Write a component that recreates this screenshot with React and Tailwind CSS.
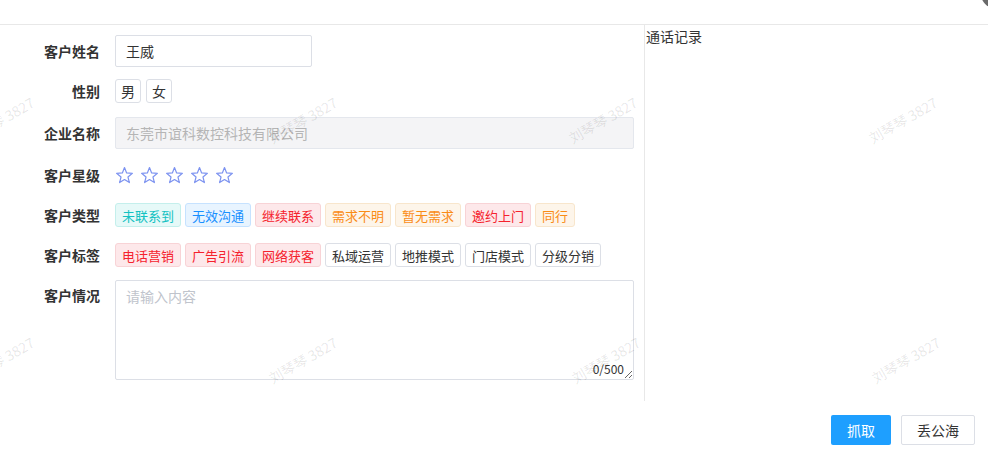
import React from "react";

const typeTags = [
  { text: "未联系到", tone: "teal" },
  { text: "无效沟通", tone: "blue" },
  { text: "继续联系", tone: "red" },
  { text: "需求不明", tone: "orange" },
  { text: "暂无需求", tone: "orange" },
  { text: "邀约上门", tone: "red" },
  { text: "同行", tone: "orange" },
];

const labelTags = [
  { text: "电话营销", tone: "red" },
  { text: "广告引流", tone: "red" },
  { text: "网络获客", tone: "red" },
  { text: "私域运营", tone: "plain" },
  { text: "地推模式", tone: "plain" },
  { text: "门店模式", tone: "plain" },
  { text: "分级分销", tone: "plain" },
];

const toneClass = {
  teal: "text-[#13c2c2] bg-[#e6f9f8] border-[#c4efec]",
  blue: "text-[#1890ff] bg-[#e8f4ff] border-[#c6e2ff]",
  red: "text-[#f5222d] bg-[#fde8ea] border-[#f8d3d6]",
  orange: "text-[#fa8c16] bg-[#fdf5ea] border-[#f8e6cc]",
  plain: "text-[#333] bg-white border-[#dcdfe6]",
};

function Tag({ text, tone }) {
  return (
    <span
      className={`h-[24px] px-[6px] flex items-center border rounded-[3px] text-[13px] leading-none ${toneClass[tone]}`}
    >
      {text}
    </span>
  );
}

function Star() {
  return (
    <svg width="19" height="19" viewBox="0 0 24 24" fill="none">
      <polygon
        points="12,2 14.7,8.78 21.99,9.26 16.38,13.92 18.17,20.99 12,17.1 5.83,20.99 7.62,13.92 2.01,9.26 9.3,8.78"
        stroke="#7d93f0"
        strokeWidth="1.5"
        strokeLinejoin="round"
      />
    </svg>
  );
}

function Label({ children, top }) {
  return (
    <div
      className={`w-[100px] shrink-0 text-right font-bold text-[14px] text-[#333] ${
        top ? "self-start pt-[5px] leading-[20px]" : ""
      }`}
    >
      {children}
    </div>
  );
}

export default function App() {
  return (
    <div className="relative w-[988px] h-[453px] bg-white overflow-hidden font-[family-name:Noto_Sans_CJK_SC,sans-serif] text-[#333]">
      <div className="h-[25px] border-b border-[#e8e8e8]" />

      <div className="flex h-[376px]">
        <div className="w-[645px] shrink-0 border-r border-[#e8e8e8] flex flex-col">
          <div className="mt-[10px] h-[32px] flex items-center">
            <Label>客户姓名</Label>
            <div className="ml-[15px] w-[197px] h-[32px] border border-[#dcdfe6] rounded-[2px] flex items-center px-[10px] text-[14px] text-[#333]">
              王威
            </div>
          </div>

          <div className="mt-[12px] h-[24px] flex items-center">
            <Label>性别</Label>
            <div className="ml-[15px] flex gap-[5px]">
              <span className="w-[26px] h-[24px] flex items-center justify-center border border-[#dcdfe6] rounded-[3px] text-[14px]">
                男
              </span>
              <span className="w-[26px] h-[24px] flex items-center justify-center border border-[#dcdfe6] rounded-[3px] text-[14px]">
                女
              </span>
            </div>
          </div>

          <div className="mt-[14px] h-[32px] flex items-center">
            <Label>企业名称</Label>
            <div className="ml-[15px] w-[519px] h-[32px] bg-[#f4f4f6] border border-[#e4e7ed] rounded-[2px] flex items-center px-[10px] text-[14px] text-[#b5b5b5]">
              东莞市谊科数控科技有限公司
            </div>
          </div>

          <div className="mt-[14px] h-[24px] flex items-center">
            <Label>客户星级</Label>
            <div className="ml-[15px] flex gap-[6px]">
              <Star />
              <Star />
              <Star />
              <Star />
              <Star />
            </div>
          </div>

          <div className="mt-[16px] h-[24px] flex items-center">
            <Label>客户类型</Label>
            <div className="ml-[15px] flex gap-[4px]">
              {typeTags.map((t) => (
                <Tag key={t.text} {...t} />
              ))}
            </div>
          </div>

          <div className="mt-[16px] h-[24px] flex items-center">
            <Label>客户标签</Label>
            <div className="ml-[15px] flex gap-[4px]">
              {labelTags.map((t) => (
                <Tag key={t.text} {...t} />
              ))}
            </div>
          </div>

          <div className="mt-[13px] h-[100px] flex">
            <Label top>客户情况</Label>
            <div className="relative ml-[15px] w-[519px] h-[100px]">
              <textarea
                className="w-full h-full block border border-[#dcdfe6] rounded-[2px] px-[10px] py-[5px] text-[14px] leading-[21px] outline-none placeholder:text-[#c0c4cc]"
                placeholder="请输入内容"
              />
              <span className="absolute right-[10px] bottom-[2px] text-[12px] text-[#333] bg-white">
                0/500
              </span>
            </div>
          </div>
        </div>

        <div className="flex-1 pl-[1px] pt-[1px] text-[14px] text-[#333] leading-[20px]">
          通话记录
        </div>
      </div>

      <div className="flex justify-end gap-[10px] pr-[13px] pt-[14px]">
        <button className="w-[60px] h-[30px] bg-[#1e9fff] text-white text-[14px] rounded-[2px]">
          抓取
        </button>
        <button className="w-[74px] h-[30px] bg-white border border-[#dcdfe6] text-[#333] text-[14px] rounded-[2px]">
          丢公海
        </button>
      </div>

      <div className="absolute left-[981px] top-[-20px] w-[28px] h-[28px] rounded-full bg-[#6a6a6a]" />

      <div className="absolute inset-0 pointer-events-none text-[14px] text-black/10 whitespace-nowrap">
        <span className="absolute left-[-40px] top-[110px] w-[80px] text-center -rotate-30">刘琴琴 3827</span>
        <span className="absolute left-[263px] top-[110px] w-[80px] text-center -rotate-30">刘琴琴 3827</span>
        <span className="absolute left-[563px] top-[110px] w-[80px] text-center -rotate-30">刘琴琴 3827</span>
        <span className="absolute left-[863px] top-[110px] w-[80px] text-center -rotate-30">刘琴琴 3827</span>
        <span className="absolute left-[-40px] top-[350px] w-[80px] text-center -rotate-30">刘琴琴 3827</span>
        <span className="absolute left-[263px] top-[350px] w-[80px] text-center -rotate-30">刘琴琴 3827</span>
        <span className="absolute left-[566px] top-[350px] w-[80px] text-center -rotate-30">刘琴琴 3827</span>
        <span className="absolute left-[866px] top-[350px] w-[80px] text-center -rotate-30">刘琴琴 3827</span>
      </div>
    </div>
  );
}
